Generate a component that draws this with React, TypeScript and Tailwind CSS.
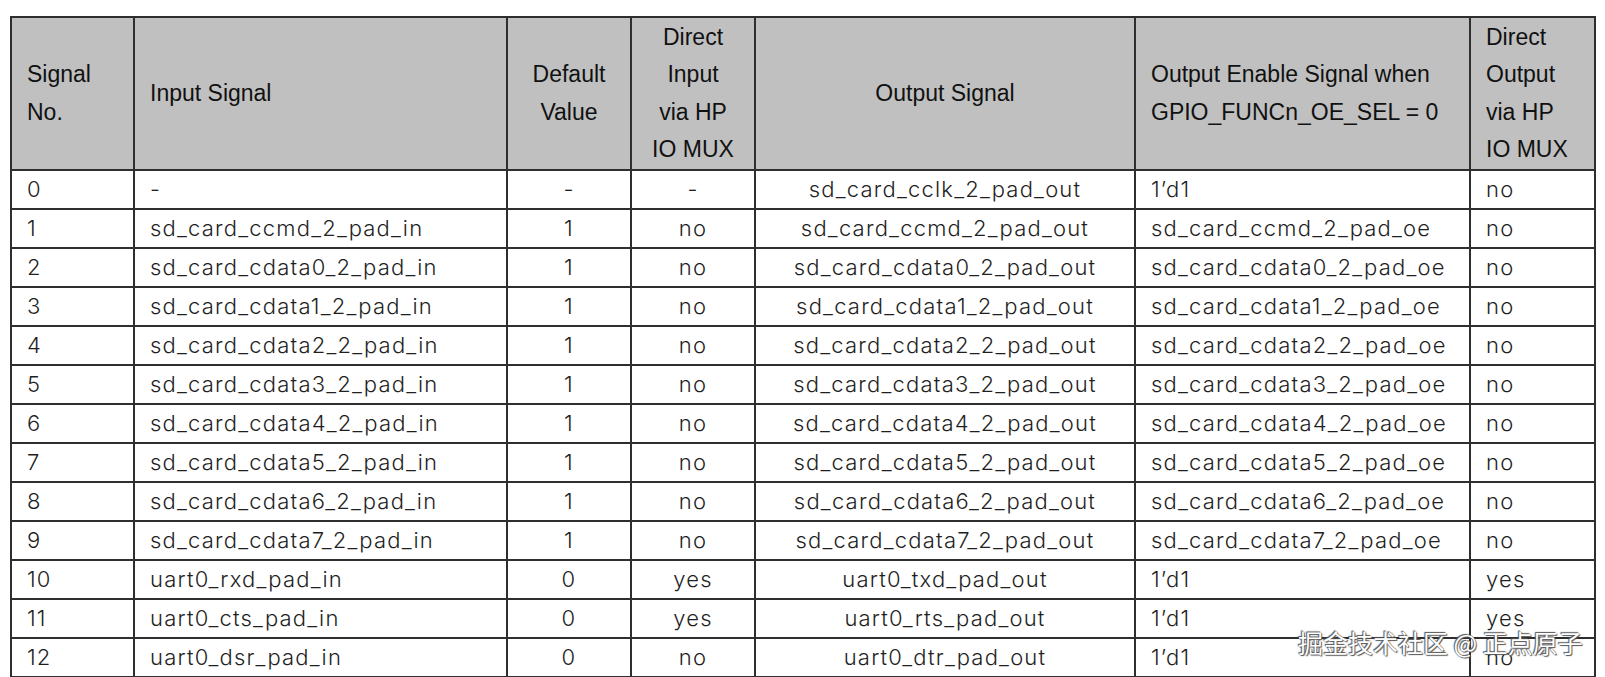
import React from "react";

type Row = [string, string, string, string, string, string, string];

const rows: Row[] = [
  ["0", "-", "-", "-", "sd_card_cclk_2_pad_out", "1’d1", "no"],
  ["1", "sd_card_ccmd_2_pad_in", "1", "no", "sd_card_ccmd_2_pad_out", "sd_card_ccmd_2_pad_oe", "no"],
  ["2", "sd_card_cdata0_2_pad_in", "1", "no", "sd_card_cdata0_2_pad_out", "sd_card_cdata0_2_pad_oe", "no"],
  ["3", "sd_card_cdata1_2_pad_in", "1", "no", "sd_card_cdata1_2_pad_out", "sd_card_cdata1_2_pad_oe", "no"],
  ["4", "sd_card_cdata2_2_pad_in", "1", "no", "sd_card_cdata2_2_pad_out", "sd_card_cdata2_2_pad_oe", "no"],
  ["5", "sd_card_cdata3_2_pad_in", "1", "no", "sd_card_cdata3_2_pad_out", "sd_card_cdata3_2_pad_oe", "no"],
  ["6", "sd_card_cdata4_2_pad_in", "1", "no", "sd_card_cdata4_2_pad_out", "sd_card_cdata4_2_pad_oe", "no"],
  ["7", "sd_card_cdata5_2_pad_in", "1", "no", "sd_card_cdata5_2_pad_out", "sd_card_cdata5_2_pad_oe", "no"],
  ["8", "sd_card_cdata6_2_pad_in", "1", "no", "sd_card_cdata6_2_pad_out", "sd_card_cdata6_2_pad_oe", "no"],
  ["9", "sd_card_cdata7_2_pad_in", "1", "no", "sd_card_cdata7_2_pad_out", "sd_card_cdata7_2_pad_oe", "no"],
  ["10", "uart0_rxd_pad_in", "0", "yes", "uart0_txd_pad_out", "1’d1", "yes"],
  ["11", "uart0_cts_pad_in", "0", "yes", "uart0_rts_pad_out", "1’d1", "yes"],
  ["12", "uart0_dsr_pad_in", "0", "no", "uart0_dtr_pad_out", "1’d1", "no"],
];

const align = ["text-left", "text-left", "text-center", "text-center", "text-center", "text-left", "text-left"];

export default function App() {
  return (
    <div className="relative w-[1605px] h-[677px] bg-white overflow-hidden">
      <div className="pt-[16px] pl-[10px]">
        <table className="table-fixed border-collapse w-[1584px] text-[#1f1f1f]">
          <colgroup>
            <col className="w-[123px]" />
            <col className="w-[373px]" />
            <col className="w-[124px]" />
            <col className="w-[124px]" />
            <col className="w-[380px]" />
            <col className="w-[335px]" />
            <col className="w-[125px]" />
          </colgroup>
          <thead>
            <tr className="h-[153px] bg-[#c0c0c0] text-[23px] leading-[37.5px] font-['Liberation_Sans',Arial,sans-serif] text-[#111]">
              <th className="border-2 border-[#2e2e2e] font-normal text-left align-middle px-[15px]">Signal<br />No.</th>
              <th className="border-2 border-[#2e2e2e] font-normal text-left align-middle px-[15px]">Input Signal</th>
              <th className="border-2 border-[#2e2e2e] font-normal text-center align-middle px-[2px]">Default<br />Value</th>
              <th className="border-2 border-[#2e2e2e] font-normal text-center align-middle px-[2px]">Direct<br />Input<br />via HP<br />IO MUX</th>
              <th className="border-2 border-[#2e2e2e] font-normal text-center align-middle px-[15px]">Output Signal</th>
              <th className="border-2 border-[#2e2e2e] font-normal text-left align-middle px-[15px]">Output Enable Signal when<br />GPIO_FUNCn_OE_SEL = 0</th>
              <th className="border-2 border-[#2e2e2e] font-normal text-left align-middle px-[15px]">Direct<br />Output<br />via HP<br />IO MUX</th>
            </tr>
          </thead>
          <tbody className="font-['Inter','Noto_Sans',sans-serif] text-[22px] font-light tracking-[1.2px]">
            {rows.map((r, i) => (
              <tr key={i} className="h-[39px]">
                {r.map((c, j) => (
                  <td
                    key={j}
                    className={`border-2 border-[#2e2e2e] ${align[j]} align-middle px-[15px] py-0 leading-[35px] whitespace-nowrap`}
                  >
                    {c}
                  </td>
                ))}
              </tr>
            ))}
          </tbody>
        </table>
      </div>
      <div className="absolute left-[1298px] top-[627px] text-[25px] leading-[30px] text-white font-['Noto_Sans_CJK_SC',sans-serif] [text-shadow:0_0_1px_#555,1px_1px_1px_#555,-1px_-1px_1px_#555]">
        掘金技术社区 @ 正点原子
      </div>
    </div>
  );
}
